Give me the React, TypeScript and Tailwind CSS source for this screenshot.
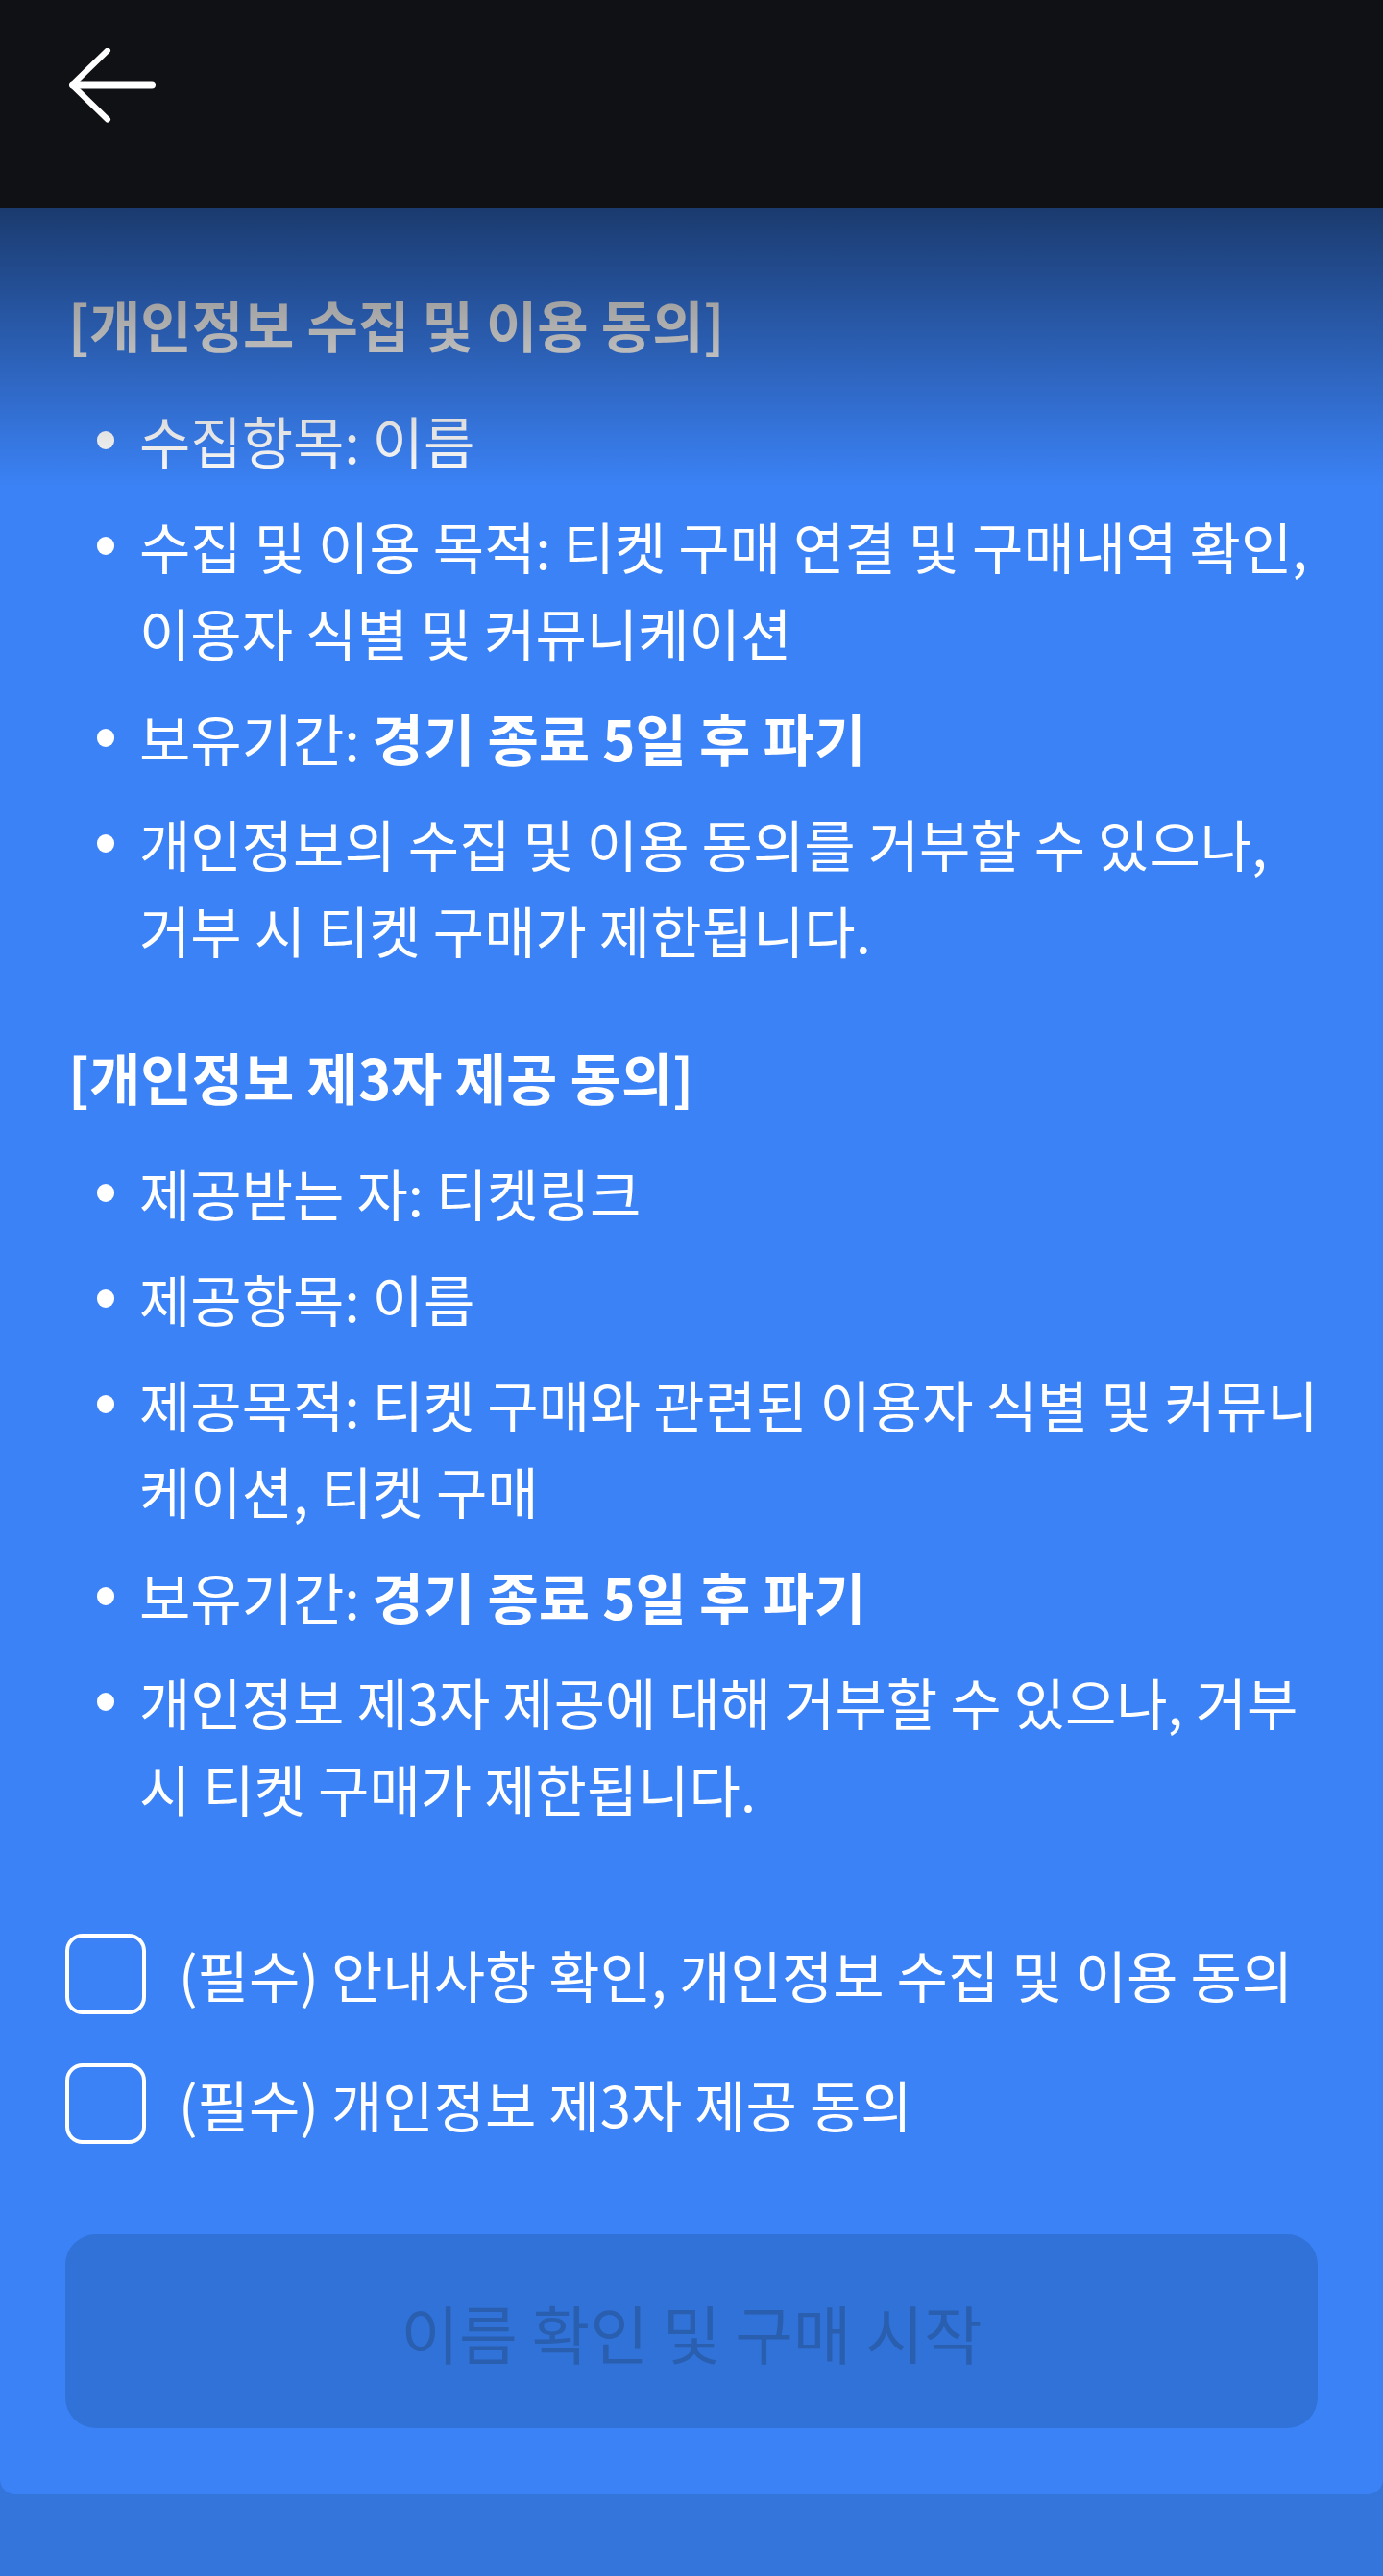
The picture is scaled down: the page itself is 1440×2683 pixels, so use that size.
import React from "react";

function Bullet({ children }: { children: React.ReactNode }) {
  return (
    <li className="relative whitespace-nowrap text-[58px] leading-[90px] text-white">
      <span className="absolute left-[-44px] top-[36px] h-[19px] w-[18px] rounded-full bg-white" />
      {children}
    </li>
  );
}

function CheckRow({ label }: { label: string }) {
  return (
    <div className="flex h-[90px] items-center gap-[34px]">
      <div className="h-[84px] w-[84px] shrink-0 rounded-[18px] border-[4px] border-white" />
      <span className="whitespace-nowrap text-[58px] leading-[90px] text-white">{label}</span>
    </div>
  );
}

export default function App() {
  return (
    <div className="min-h-[2683px] w-[1440px] bg-[#3475dc] font-['Noto_Sans_CJK_KR',sans-serif]">
      <header className="h-[217px] bg-[#101115] pl-[72px] pt-[50px]">
        <svg width="92" height="80" viewBox="0 0 92 80" fill="none" stroke="white" strokeLinecap="round" strokeLinejoin="round">
          <path d="M4 38.5 H86" strokeWidth="8" />
          <path d="M40 2.5 L3 38.5 L40 74.5" strokeWidth="6" />
        </svg>
      </header>

      <main className="relative rounded-b-[16px] bg-[#3b82f6] px-[68px] pb-[69px] pt-[75px]">
        <section>
          <h2 className="whitespace-nowrap pl-[3px] text-[58px] font-bold leading-[90px] text-white">
            [개인정보 수집 및 이용 동의]
          </h2>
          <ul className="mt-[31px] flex flex-col gap-[20px] pl-[77px]">
            <Bullet>수집항목: 이름</Bullet>
            <Bullet>
              수집 및 이용 목적: 티켓 구매 연결 및 구매내역 확인,
              <br />
              이용자 식별 및 커뮤니케이션
            </Bullet>
            <Bullet>
              보유기간: <span className="font-bold">경기 종료 5일 후 파기</span>
            </Bullet>
            <Bullet>
              개인정보의 수집 및 이용 동의를 거부할 수 있으나,
              <br />
              거부 시 티켓 구매가 제한됩니다.
            </Bullet>
          </ul>
        </section>

        <section className="mt-[63px]">
          <h2 className="whitespace-nowrap pl-[3px] text-[58px] font-bold leading-[90px] text-white">
            [개인정보 제3자 제공 동의]
          </h2>
          <ul className="mt-[31px] flex flex-col gap-[20px] pl-[77px]">
            <Bullet>제공받는 자: 티켓링크</Bullet>
            <Bullet>제공항목: 이름</Bullet>
            <Bullet>
              제공목적: 티켓 구매와 관련된 이용자 식별 및 커뮤니
              <br />
              케이션, 티켓 구매
            </Bullet>
            <Bullet>
              보유기간: <span className="font-bold">경기 종료 5일 후 파기</span>
            </Bullet>
            <Bullet>
              개인정보 제3자 제공에 대해 거부할 수 있으나, 거부
              <br />
              시 티켓 구매가 제한됩니다.
            </Bullet>
          </ul>
        </section>

        <div className="mt-[104px] flex flex-col gap-[45px]">
          <CheckRow label="(필수) 안내사항 확인, 개인정보 수집 및 이용 동의" />
          <CheckRow label="(필수) 개인정보 제3자 제공 동의" />
        </div>

        <button
          type="button"
          disabled
          className="mt-[91px] flex h-[202px] w-full items-center justify-center rounded-[32px] bg-[#3172d8] text-[66px] font-normal text-[#2a5fb0]"
        >
          이름 확인 및 구매 시작
        </button>

        <div className="pointer-events-none absolute inset-x-0 top-0 h-[290px] bg-gradient-to-b from-black/55 to-transparent" />
      </main>
    </div>
  );
}
